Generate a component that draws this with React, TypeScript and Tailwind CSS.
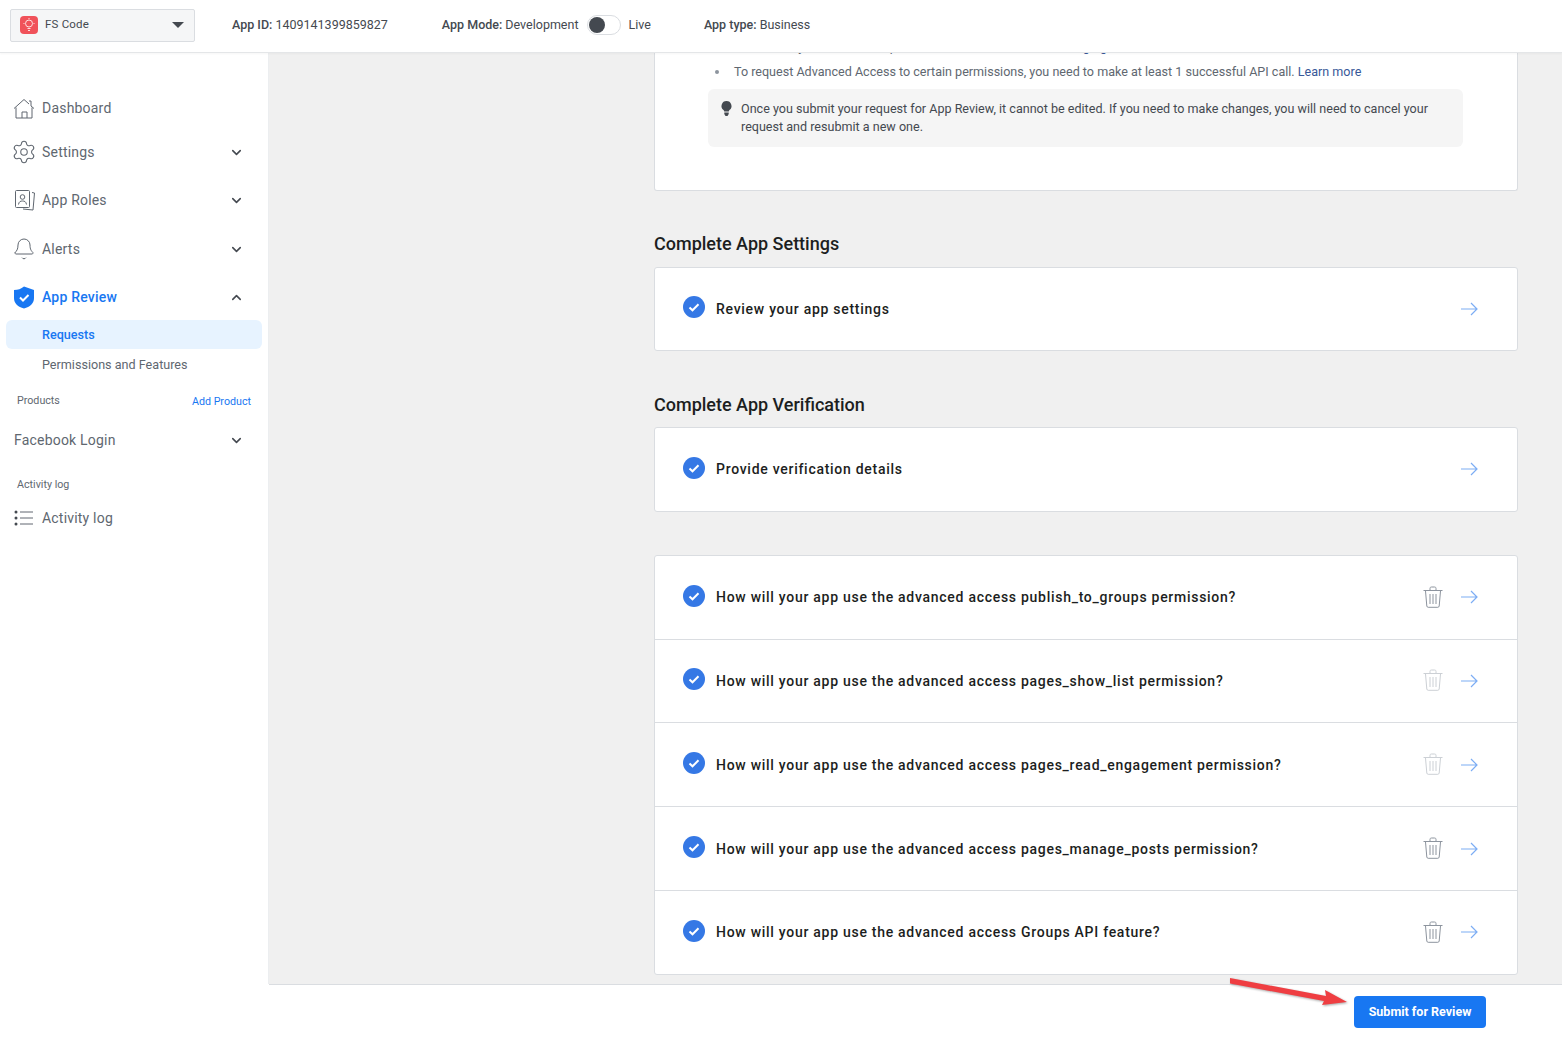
import { Bell, ChevronDown, ChevronUp, Settings } from "lucide-react";
import type { ReactNode } from "react";

const permissionRows = [
  { text: "How will your app use the advanced access publish_to_groups permission?", dark: true, h: "h-[84px]" },
  { text: "How will your app use the advanced access pages_show_list permission?", dark: false, h: "h-[83px]" },
  { text: "How will your app use the advanced access pages_read_engagement permission?", dark: false, h: "h-[84px] pt-[1px]" },
  { text: "How will your app use the advanced access pages_manage_posts permission?", dark: true, h: "h-[84px] pt-[1px]" },
  { text: "How will your app use the advanced access Groups API feature?", dark: true, h: "h-[83px]" },
];

function HouseIcon() {
  return (
    <svg width="23" height="21" viewBox="0 0 22 20" fill="none" stroke="#606770" strokeWidth="1">
      <path d="M1 10 11 1l5 4.500M16 2.500h2v5L21 10" />
      <path d="M3 9v10.500h16V9M9 19.500v-6h5v6" />
    </svg>
  );
}

function RolesIcon() {
  return (
    <svg width="21" height="22" viewBox="0 0 21 22" fill="none" stroke="#606770" strokeWidth="1">
      <rect x="1.500" y="1.500" width="14" height="17" rx="1" />
      <circle cx="8.500" cy="8" r="2.300" />
      <path d="M4.500 15.500c.5-3 2-3.500 4-3.500s3.500.5 4 3.500M18 3.500l2.500.5-1.500 17-10-1" />
    </svg>
  );
}

function ShieldIcon() {
  return (
    <svg width="22" height="23" viewBox="0 0 22 23">
      <path d="M11 .5 21 4v8c0 5.500-4 8.800-10 10.500C5 20.800 1 17.500 1 12V4c4 0 7-1 10-3.500Z" fill="#1877f2" />
      <path d="m7 11.500 3 3 5.500-5.500" fill="none" stroke="#fff" strokeWidth="2" />
    </svg>
  );
}

function ListIcon() {
  return (
    <svg width="20" height="16" viewBox="0 0 20 16" fill="none">
      <circle cx="2" cy="2" r="1.500" fill="#444950" />
      <circle cx="2" cy="8" r="1.500" fill="#444950" />
      <circle cx="2" cy="14" r="1.500" fill="#444950" />
      <path d="M6 2h13M6 8h13M6 14h13" stroke="#606770" />
    </svg>
  );
}

function NavRow({ icon, label, chevron, active, className }: { icon?: ReactNode; label: string; chevron?: "up" | "down"; active?: boolean; className: string }) {
  return (
    <div className={`flex h-[32px] items-center pl-[13px] pr-[24px] ${className}`}>
      {icon && <div className="mr-[7px] flex w-[22px] justify-center">{icon}</div>}
      <span className={`flex-1 text-[14px] tracking-[0.2px] ${icon ? "" : "ml-[1px]"} ${active ? "font-medium text-[#1877f2]" : "text-[#606770]"}`}>{label}</span>
      {chevron === "down" && <ChevronDown size={15} strokeWidth={2.5} className="text-[#444950]" />}
      {chevron === "up" && <ChevronUp size={15} strokeWidth={2.5} className="text-[#444950]" />}
    </div>
  );
}

function CheckCircle() {
  return (
    <svg width="22" height="22" viewBox="0 0 22 22" className="shrink-0">
      <circle cx="11" cy="11" r="11" fill="#3578e5" />
      <path d="m6.500 11.500 3 2.800 6-6" fill="none" stroke="#fff" strokeWidth="2" />
    </svg>
  );
}

function TrashIcon({ dark }: { dark: boolean }) {
  const color = dark ? "#8d949e" : "#ccd0d5";
  return (
    <svg width="20" height="22" viewBox="0 0 20 22" fill="none" stroke={color} strokeWidth="1">
      <path d="M.5 4.500h19M7 4.500V2.500c0-1 .5-1.500 1.500-1.500h3c1 0 1.500.5 1.500 1.500v2" />
      <path d="M2.500 5l1.300 15c.1.8.6 1.300 1.400 1.300h9.600c.8 0 1.300-.5 1.400-1.300l1.300-15" />
      <path d="M7 8v10M10 8v10M13 8v10" />
    </svg>
  );
}

function ArrowIcon() {
  return (
    <svg width="17" height="14" viewBox="0 0 17 14" fill="none" stroke="#7cadf4" strokeWidth="1.200" className="-mt-[1px]">
      <path d="M0 7h16M10 1l6 6-6 6" />
    </svg>
  );
}

function TaskRow({ text, trash, dark, className }: { text: string; trash?: boolean; dark?: boolean; className: string }) {
  return (
    <div className={`flex items-center pl-[28px] pr-[39px] ${className}`}>
      <div className="-mt-[4px]">
        <CheckCircle />
      </div>
      <span className="ml-[11px] flex-1 text-[14px] font-medium tracking-[0.72px] text-[#1c1e21]">{text}</span>
      {trash && (
        <div className="mr-[18px] -mt-[2px]">
          <TrashIcon dark={!!dark} />
        </div>
      )}
      <ArrowIcon />
    </div>
  );
}

export default function App() {
  return (
    <div className="relative flex h-[1039px] w-full flex-col overflow-hidden bg-white font-['Roboto',sans-serif] text-[#444950]">
      {/* top bar */}
      <header className="relative z-10 flex h-[53px] shrink-0 items-center border-b border-[#e4e6e8] bg-white pb-[2px] pl-[10px] text-[12.500px] shadow-[0_1px_2px_rgba(0,0,0,0.04)]">
        <div className="flex h-[33px] w-[185px] items-center rounded-[2px] border border-[#dadde1] bg-[#f5f6f7] pl-[9px] pr-[10px]">
          <div className="flex h-[18px] w-[18px] items-center justify-center rounded-[4px] bg-[#f0525a]">
            <svg width="12" height="14" viewBox="0 0 12 14" fill="none" stroke="#fde0e0" strokeWidth="1">
              <circle cx="6" cy="5.500" r="3.500" />
              <path d="M4.500 10.500h3M5 12.500h2M6 0v1M0.500 5.500h1M10.500 5.500h1" />
            </svg>
          </div>
          <span className="ml-[7px] flex-1 text-[11.500px] tracking-[0.2px] text-[#444950]">FS Code</span>
          <svg width="12" height="6" viewBox="0 0 12 6">
            <path d="M0 0h12L6 6Z" fill="#444950" />
          </svg>
        </div>
        <span className="ml-[37px]">
          <b className="font-medium">App ID:</b> 1409141399859827
        </span>
        <span className="ml-[54px]">
          <b className="font-medium">App Mode:</b> Development
        </span>
        <div className="ml-[8px] flex h-[20px] w-[34px] items-center rounded-full border border-[#dadde1] bg-white pl-[1px]">
          <div className="h-[16px] w-[16px] rounded-full bg-[#444950]" />
        </div>
        <span className="ml-[8px]">Live</span>
        <span className="ml-[53px]">
          <b className="font-medium">App type:</b> Business
        </span>
      </header>

      <div className="flex min-h-0 flex-1">
        {/* sidebar */}
        <aside className="w-[269px] shrink-0 border-r border-[#eceef0] bg-white">
          <NavRow className="mt-[39px]" icon={<HouseIcon />} label="Dashboard" />
          <NavRow className="mt-[12px]" icon={<Settings size={26} strokeWidth={1} className="shrink-0 text-[#606770]" />} label="Settings" chevron="down" />
          <NavRow className="mt-[16px]" icon={<RolesIcon />} label="App Roles" chevron="down" />
          <NavRow className="mt-[17px]" icon={<Bell size={24} strokeWidth={1} className="shrink-0 text-[#606770]" />} label="Alerts" chevron="down" />
          <NavRow className="mt-[16px]" icon={<ShieldIcon />} label="App Review" chevron="up" active />
          <div className="mx-[6px] mt-[7px] flex h-[29px] items-center rounded-[6px] bg-[#e7f3ff] pt-[1px] pl-[36px] text-[12.600px] font-medium text-[#1877f2]">Requests</div>
          <div className="flex h-[32px] items-center pl-[42px] text-[12.600px] text-[#606770]">Permissions and Features</div>
          <div className="mt-[5px] flex h-[30px] items-center justify-between pl-[17px] pr-[17px] text-[10.700px] text-[#606770]">
            <span>Products</span>
            <span className="mt-[2px] text-[#1877f2]">Add Product</span>
          </div>
          <NavRow className="mt-[8px]" label="Facebook Login" chevron="down" />
          <div className="mt-[17px] flex h-[24px] items-center pl-[17px] text-[10.700px] text-[#606770]">Activity log</div>
          <NavRow className="mt-[5px]" icon={<ListIcon />} label="Activity log" />
        </aside>

        {/* main content */}
        <main className="min-w-0 flex-1 overflow-hidden bg-[#f0f0f0] pl-[385px] pr-[44px]">
          <div className="-mt-[16px] h-[154px] rounded-b-[3px] border border-t-0 border-[#dadde1] bg-white pl-[53px] pr-[54px]">
            <ul className="text-[12.570px] leading-[19px] text-[#606770]">
              <li className="flex items-center pl-[26px] whitespace-nowrap">
                <span>Remember you should then provide the details about the&nbsp;</span>
                <span className="text-[#385898]">managing</span>
              </li>
              <li className="mt-[6px] flex items-center">
                <span className="mr-[15px] ml-[7px] h-[4px] w-[4px] rounded-full bg-[#8d949e]" />
                <span>To request Advanced Access to certain permissions, you need to make at least 1 successful API call.&nbsp;</span>
                <span className="text-[#385898]">Learn more</span>
              </li>
            </ul>
            <div className="mt-[8px] flex h-[58px] rounded-[6px] bg-[#f5f5f5] pt-[11px] pl-[12px] pr-[20px]">
              <svg width="13" height="15" viewBox="0 0 13 15" className="mt-[1px] shrink-0">
                <path d="M6.500 0a5 5 0 0 0-3 9c.5.4.7 1 .7 1.500h4.600c0-.5.2-1.100.7-1.500a5 5 0 0 0-3-9Z" fill="#444950" />
                <path d="M4.300 11.500h4.400v1.500L7.500 15h-2l-1.200-2Z" fill="#444950" />
              </svg>
              <p className="ml-[8px] text-[12.570px] leading-[18px] text-[#444950]">Once you submit your request for App Review, it cannot be edited. If you need to make changes, you will need to cancel your request and resubmit a new one.</p>
            </div>
          </div>

          <h2 className="mt-[42px] h-[22px] text-[18px] leading-[22px] font-medium text-[#1c1e21]">Complete App Settings</h2>
          <div className="mt-[12px] rounded-[3px] border border-[#dadde1] bg-white">
            <TaskRow className="h-[82px]" text="Review your app settings" />
          </div>

          <h2 className="mt-[43px] h-[22px] text-[18px] leading-[22px] font-medium text-[#1c1e21]">Complete App Verification</h2>
          <div className="mt-[11px] rounded-[3px] border border-[#dadde1] bg-white">
            <TaskRow className="h-[83px]" text="Provide verification details" />
          </div>

          <div className="mt-[43px] divide-y divide-[#dadde1] rounded-[3px] border border-[#dadde1] bg-white">
            {permissionRows.map((row) => (
              <TaskRow key={row.text} className={row.h} text={row.text} trash dark={row.dark} />
            ))}
          </div>
        </main>
      </div>

      {/* footer */}
      <footer className="ml-[269px] flex h-[55px] shrink-0 items-start justify-end border-t border-[#dadde1] bg-white pt-[11px] pr-[76px]">
        <button className="h-[32px] w-[132px] rounded-[4px] bg-[#1877f2] text-[12.500px] font-bold text-white">Submit for Review</button>
      </footer>

      {/* red annotation arrow */}
      <svg width="120" height="30" viewBox="0 0 120 30" className="absolute top-[977px] left-[1229px] z-20 drop-shadow-[1px_1px_1px_rgba(0,0,0,0.35)]">
        <path d="M1 1 97 19l-1-6 22 12-25 3 2-4L1 6.500Z" fill="#ef3e42" />
      </svg>
    </div>
  );
}
